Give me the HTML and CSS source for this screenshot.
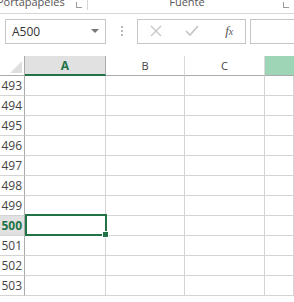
FILE: index.html
```html
<!DOCTYPE html>
<html lang="es">
<head>
    <meta charset="UTF-8">
    <title>Hoja</title>
    <link rel="stylesheet" href="styles.css">
</head>
<body>
    <div class="ribbon">
        <div class="group group-clip">
            <span class="group-label">Portapapeles</span>
            <span class="launcher"></span>
        </div>
        <div class="group group-font">
            <span class="group-label">Fuente</span>
            <span class="launcher"></span>
        </div>
    </div>

    <div class="formula-bar">
        <div class="name-box">
            <span>A500</span>
            <span class="caret"></span>
        </div>
        <div class="grip"><i></i><i></i><i></i></div>
        <div class="fx-buttons">
            <span class="fx-btn">
                <svg width="12" height="12" viewBox="0 0 12 12"><path d="M1 1 L11 11 M11 1 L1 11" stroke="#c4c4c4" stroke-width="1.2" fill="none"/></svg>
            </span>
            <span class="fx-btn">
                <svg width="14" height="12" viewBox="0 0 14 12"><path d="M1 6 L5 10 L13 1" stroke="#c4c4c4" stroke-width="1.6" fill="none"/></svg>
            </span>
            <span class="fx-btn"><span class="fx-label">f<small>x</small></span></span>
        </div>
        <div class="formula-input"></div>
    </div>

    <div class="sheet">
        <div class="corner"></div>
        <div class="col-head active">A</div>
        <div class="col-head">B</div>
        <div class="col-head">C</div>
        <div class="col-head hover"></div>
    </div>
    <div class="sheet" id="rows"></div>

    <script>
        const rows = document.getElementById('rows');
        for (let n = 493; n <= 503; n++) {
            const head = document.createElement('div');
            head.className = 'row-head' + (n === 500 ? ' active' : '');
            head.textContent = n;
            rows.appendChild(head);
            for (let c = 0; c < 4; c++) {
                const cell = document.createElement('div');
                cell.className = 'cell';
                if (n === 500 && c === 0) {
                    cell.classList.add('selected');
                    const handle = document.createElement('span');
                    handle.className = 'handle';
                    cell.appendChild(handle);
                }
                rows.appendChild(cell);
            }
        }
    </script>
</body>
</html>
```

FILE: styles.css
```css
body {
    margin: 0;
    background: #fff;
    font-family: "Open Sans", "Noto Sans", sans-serif;
    overflow: hidden;
    width: 294px;
    height: 302px;
}

.ribbon {
    display: flex;
    height: 13px;
    border-bottom: 1px solid #d6d6d6;
    overflow: hidden;
}

.group {
    position: relative;
    display: flex;
    height: 13px;
    font-size: 11px;
    color: #555;
}

.group-label {
    line-height: 11px;
    margin-top: -4px;
}

.group-clip {
    width: 90px;
    border-right: 1px solid #d6d6d6;
    height: 10px;
    margin-left: -3px;
}

.group-font {
    flex: 1;
    justify-content: center;
    padding-right: 8px;
}

.launcher {
    position: absolute;
    top: 2px;
    width: 5px;
    height: 5px;
    border-left: 1px solid #9a9a9a;
    border-bottom: 1px solid #9a9a9a;
}

.group-clip .launcher {
    left: 79px;
}

.group-font .launcher {
    right: 5px;
}

.formula-bar {
    display: flex;
    align-items: center;
    height: 42px;
    padding-left: 5px;
}

.name-box {
    box-sizing: border-box;
    width: 101px;
    height: 25px;
    border: 1px solid #c6c6c6;
    display: flex;
    align-items: center;
    justify-content: space-between;
    padding: 0 6px 0 6px;
    font-size: 12px;
    color: #333;
    margin-top: -8px;
}

.caret {
    width: 0;
    height: 0;
    border-left: 4px solid transparent;
    border-right: 4px solid transparent;
    border-top: 4px solid #777;
}

.grip {
    width: 31px;
    display: flex;
    flex-direction: column;
    align-items: center;
    gap: 2px;
    margin-top: -8px;
}

.grip i {
    width: 2px;
    height: 2px;
    background: #b8b8b8;
}

.fx-buttons {
    box-sizing: border-box;
    width: 109px;
    height: 25px;
    border: 1px solid #c6c6c6;
    display: flex;
    align-items: center;
    margin-top: -8px;
}

.fx-btn {
    width: 36px;
    display: flex;
    justify-content: center;
}

.fx-label {
    font-family: "Liberation Serif", serif;
    font-style: italic;
    font-size: 13px;
    color: #555;
    padding-left: 4px;
}

.fx-label small {
    font-size: 10px;
}

.formula-input {
    box-sizing: border-box;
    flex: 1;
    height: 25px;
    margin-left: 4px;
    border: 1px solid #c6c6c6;
    border-right: none;
    margin-top: -8px;
}

.sheet {
    display: grid;
    grid-template-columns: 25px 81px 79px 80px 1fr;
    grid-auto-rows: 20px;
}

.corner {
    position: relative;
    border-right: 1px solid #ababab;
    border-bottom: 1px solid #ababab;
    box-sizing: border-box;
    overflow: hidden;
}

.corner::after {
    content: "";
    position: absolute;
    right: 2px;
    bottom: 2px;
    border-left: 12px solid transparent;
    border-bottom: 12px solid #dfdfdf;
}

.col-head {
    box-sizing: border-box;
    border-right: 1px solid #dadada;
    border-bottom: 1px solid #ababab;
    display: flex;
    align-items: center;
    justify-content: center;
    font-size: 11px;
    color: #444;
}

.col-head.active {
    background: #e1e1e1;
    border-bottom: 2px solid #217346;
    border-right-color: #ababab;
    color: #217346;
    font-weight: bold;
    font-size: 12px;
}

.col-head.hover {
    background: #9fd5b7;
    border-right: none;
}

.row-head {
    box-sizing: border-box;
    border-right: 1px solid #ababab;
    border-bottom: 1px solid #d4d4d4;
    display: flex;
    align-items: center;
    justify-content: flex-end;
    padding-right: 2px;
    font-size: 12px;
    color: #444;
}

.row-head.active {
    background: #e1e1e1;
    color: #217346;
    font-weight: bold;
}

.cell {
    box-sizing: border-box;
    border-right: 1px solid #d4d4d4;
    border-bottom: 1px solid #d4d4d4;
    position: relative;
}

.cell.selected::before {
    content: "";
    position: absolute;
    left: 0;
    top: -2px;
    right: -2px;
    bottom: -1px;
    border: 2px solid #217346;
}

.handle {
    position: absolute;
    right: -4px;
    bottom: -3px;
    width: 5px;
    height: 5px;
    background: #217346;
    border: 1px solid #fff;
    z-index: 1;
}
```
